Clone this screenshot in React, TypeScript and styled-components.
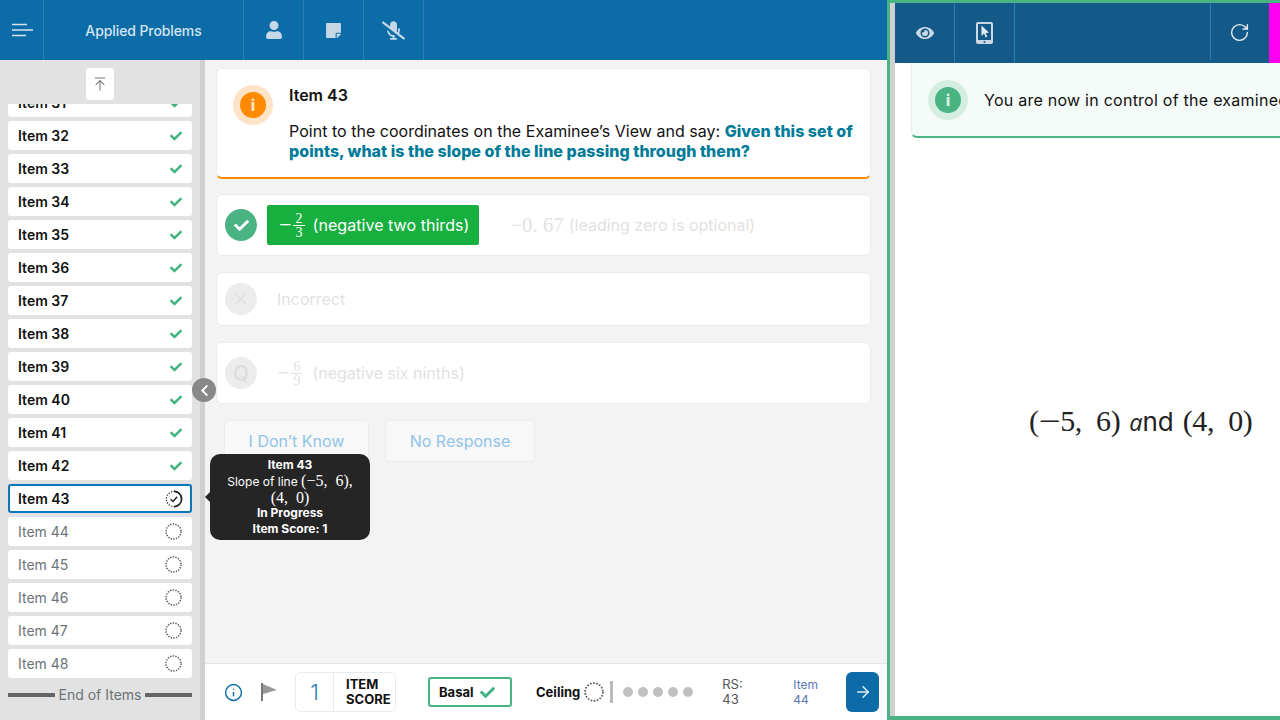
import React from "react";
import styled, { createGlobalStyle } from "styled-components";
import { FaUser, FaStickyNote, FaMicrophoneSlash, FaEye, FaChevronLeft, FaCheck } from "react-icons/fa";
import { ArrowRight, ArrowUpToLine, Info, RotateCw, X } from "lucide-react";

const GlobalStyle = createGlobalStyle`
  html, body {
    margin: 0;
    padding: 0;
    width: 1280px;
    height: 720px;
    overflow: hidden;
    font-family: "Inter", "Liberation Sans", sans-serif;
  }
  * { box-sizing: border-box; }
`;

const doneItems = [32, 33, 34, 35, 36, 37, 38, 39, 40, 41, 42];
const pendingItems = [44, 45, 46, 47, 48];

const DottedCircle: React.FC<{ size?: number }> = ({ size = 17 }) => (
  <svg width={size} height={size} viewBox="0 0 16 16" fill="none" aria-hidden={true}>
    <circle cx="8" cy="8" r="7.1" stroke="#5a5a5a" strokeWidth="1.4" strokeDasharray="1.3 1.2" />
  </svg>
);

const ProgressCircle: React.FC = () => (
  <svg width="18" height="18" viewBox="0 0 18 18" fill="none" aria-hidden={true}>
    <circle cx="9" cy="9" r="7.6" stroke="#444" strokeWidth="1.3" strokeDasharray="1.4 1.3" />
    <path d="M9 1.4 A7.6 7.6 0 0 1 9 16.6" stroke="#222" strokeWidth="1.6" />
    <path d="M5.6 9.2 L8 11.4 L12.2 6.8" stroke="#222" strokeWidth="1.4" />
  </svg>
);

const Fraction: React.FC<{ top: string; bottom: string }> = ({ top, bottom }) => (
  <MathText>
    <Minus>−</Minus>
    <Frac>
      <span>{top}</span>
      <span>{bottom}</span>
    </Frac>
  </MathText>
);

const App: React.FC = () => {
  return (
    <Page>
      <GlobalStyle />
      <LeftPane>
        <Header>
          <MenuCell>
            <svg width="22" height="14" viewBox="0 0 22 14" fill="none" aria-hidden={true}>
              <path d="M0 1.5H15M0 7H21M0 12.5H14" stroke="#d5e4ef" strokeWidth="1.6" />
            </svg>
          </MenuCell>
          <TitleCell>Applied Problems</TitleCell>
          <IconCell>
            <FaUser size={18} aria-hidden={true} />
          </IconCell>
          <IconCell>
            <FaStickyNote size={17} aria-hidden={true} />
          </IconCell>
          <IconCell>
            <FaMicrophoneSlash size={23} aria-hidden={true} />
          </IconCell>
        </Header>
        <Body>
          <Sidebar>
            <ScrollTop>
              <ArrowUpToLine size={16} strokeWidth={1.6} aria-hidden={true} />
            </ScrollTop>
            <ItemList>
              <ItemScroller>
                <ItemRow>
                  <span>Item 31</span>
                  <FaCheck size={12} color="#3fb27f" aria-hidden={true} />
                </ItemRow>
                {doneItems.map((n) => (
                  <ItemRow key={n}>
                    <span>Item {n}</span>
                    <FaCheck size={12} color="#3fb27f" aria-hidden={true} />
                  </ItemRow>
                ))}
                <ItemRow $active>
                  <span>Item 43</span>
                  <ProgressCircle />
                </ItemRow>
                {pendingItems.map((n) => (
                  <ItemRow key={n} $pending>
                    <span>Item {n}</span>
                    <DottedCircle />
                  </ItemRow>
                ))}
              </ItemScroller>
            </ItemList>
            <EndOfItems>
              <EndLine />
              <span>End of Items</span>
              <EndLine />
            </EndOfItems>
          </Sidebar>
          <MainColumn>
            <Content>
              <QuestionCard>
                <Badge $ring="#ffe3c6" $fill="#ff8a00">
                  <span>i</span>
                </Badge>
                <QuestionText>
                  <QuestionTitle>Item 43</QuestionTitle>
                  <QuestionBody>
                    Point to the coordinates on the Examinee’s View and say:{" "}
                    <Prompt>
                      Given this set of points, what is the slope of the line passing through them?
                    </Prompt>
                  </QuestionBody>
                </QuestionText>
              </QuestionCard>

              <AnswerCard $height={62}>
                <AnswerIcon $selected>
                  <FaCheck size={15} aria-hidden={true} />
                </AnswerIcon>
                <SelectedAnswer>
                  <Fraction top="2" bottom="3" />
                  <span>(negative two thirds)</span>
                </SelectedAnswer>
                <MutedText $left={31} $gap={5}>
                  <DecimalNumber>−0.&nbsp;67</DecimalNumber> (leading zero is optional)
                </MutedText>
              </AnswerCard>

              <AnswerCard $height={54}>
                <AnswerIcon>
                  <X size={20} strokeWidth={1.4} aria-hidden={true} />
                </AnswerIcon>
                <MutedText $left={20} $gap={8}>Incorrect</MutedText>
              </AnswerCard>

              <AnswerCard $height={62}>
                <AnswerIcon>
                  <QMark>Q</QMark>
                </AnswerIcon>
                <MutedText $left={20} $gap={10}>
                  <Fraction top="6" bottom="9" /> (negative six ninths)
                </MutedText>
              </AnswerCard>

              <ActionRow>
                <ActionButton $width={145}>I Don’t Know</ActionButton>
                <ActionButton $width={150}>No Response</ActionButton>
              </ActionRow>
            </Content>

            <Footer>
              <FooterInfo>
                <Info size={19} strokeWidth={1.8} aria-hidden={true} />
              </FooterInfo>
              <FlagIcon width="16" height="18" viewBox="0 0 16 18" aria-hidden={true}>
                <rect x="0" y="0" width="2" height="18" fill="#777" />
                <path d="M2 1 L16 7 L2 11 Z" fill="#999" />
              </FlagIcon>
              <ScoreBox>
                <ScoreValue>1</ScoreValue>
                <ScoreLabel>
                  ITEM
                  <br />
                  SCORE
                </ScoreLabel>
              </ScoreBox>
              <BasalBox>
                Basal
                <FaCheck size={15} color="#3fb27f" aria-hidden={true} />
              </BasalBox>
              <Ceiling>
                Ceiling
                <DottedCircle size={20} />
              </Ceiling>
              <VerticalRule />
              <Dots>
                {[0, 1, 2, 3, 4].map((d) => (
                  <Dot key={d} />
                ))}
              </Dots>
              <RawScore>
                RS:
                <br />
                43
              </RawScore>
              <NextLabel>
                Item
                <br />
                44
              </NextLabel>
              <NextButton>
                <ArrowRight size={18} strokeWidth={2} aria-hidden={true} />
              </NextButton>
            </Footer>
          </MainColumn>
        </Body>
      </LeftPane>

      <RightPane>
        <GreyStrip />
        <RightColumn>
          <RightHeader>
            <RightCell>
              <FaEye size={18} aria-hidden={true} />
            </RightCell>
            <RightCell>
              <svg width="18" height="22" viewBox="0 0 18 22" aria-hidden={true}>
                <rect x="0" y="0" width="17" height="22" rx="2" fill="#c9d8e4" />
                <rect x="2" y="2" width="13" height="16" fill="#145a88" />
                <path d="M5.5 3.5 L5.5 14 L8 11.6 L9.8 15.6 L11.4 14.8 L9.6 11 L13 10.8 Z" fill="#e4edf3" />
                <circle cx="8.5" cy="20" r="1" fill="#145a88" />
              </svg>
            </RightCell>
            <RightSpacer />
            <RefreshCell>
              <RotateCw size={21} strokeWidth={1.6} aria-hidden={true} />
            </RefreshCell>
            <MagentaTab />
          </RightHeader>
          <RightBody>
            <ControlAlert>
              <Badge $ring="#d4eee2" $fill="#4ab384">
                <span>i</span>
              </Badge>
              <AlertText>You are now in control of the examinee’s screen.</AlertText>
            </ControlAlert>
            <Stimulus>
              <StimulusMath>
                (<StimulusMinus>−</StimulusMinus>5,&nbsp;&nbsp;6)
              </StimulusMath>
              <span>
                <AndLetter>a</AndLetter>nd
              </span>
              <StimulusMath>(4,&nbsp;&nbsp;0)</StimulusMath>
            </Stimulus>
          </RightBody>
        </RightColumn>
      </RightPane>

      <CollapseButton>
        <FaChevronLeft size={13} aria-hidden={true} />
      </CollapseButton>
      <TooltipArrow />
      <Tooltip>
        <strong>Item 43</strong>
        <TooltipLine>
          Slope of line <TooltipMath>(−5,&nbsp;&nbsp;6),</TooltipMath>
        </TooltipLine>
        <TooltipMath>(4,&nbsp;&nbsp;0)</TooltipMath>
        <strong>In Progress</strong>
        <strong>Item Score: 1</strong>
      </Tooltip>
    </Page>
  );
};

export default App;

const Page = styled.div`
  position: relative;
  display: flex;
  width: 1280px;
  height: 720px;
  overflow: hidden;
  background: #fff;
`;

const LeftPane = styled.div`
  flex: 0 0 887px;
  display: flex;
  flex-direction: column;
`;

const Header = styled.div`
  display: flex;
  flex: 0 0 60px;
  background: #0b6ca8;
  color: #c6d8e6;
`;

const MenuCell = styled.div`
  flex: 0 0 44px;
  display: flex;
  align-items: center;
  padding-left: 12px;
  border-right: 1px solid #2a7fb5;
`;

const TitleCell = styled.div`
  flex: 0 0 200px;
  display: flex;
  align-items: center;
  justify-content: center;
  border-right: 1px solid #2a7fb5;
  color: #d5e4ef;
  font-size: 14px;
  font-weight: 500;
  letter-spacing: -0.1px;
`;

const IconCell = styled.div`
  flex: 0 0 60px;
  display: flex;
  align-items: center;
  justify-content: center;
  border-right: 1px solid #2a7fb5;
`;

const Body = styled.div`
  flex: 1;
  display: flex;
  min-height: 0;
`;

const Sidebar = styled.div`
  flex: 0 0 205px;
  display: flex;
  flex-direction: column;
  padding-top: 8px;
  background: #e2e2e2;
  border-right: 5px solid #d0d0d0;
`;

const ScrollTop = styled.div`
  align-self: center;
  flex: 0 0 32px;
  width: 28px;
  display: flex;
  align-items: center;
  justify-content: center;
  background: #fff;
  border-radius: 3px;
  color: #777;
`;

const ItemList = styled.div`
  flex: 0 0 574px;
  margin-top: 4px;
  overflow: hidden;
`;

const ItemScroller = styled.div`
  display: flex;
  flex-direction: column;
  gap: 4px;
  margin-top: -16px;
  padding: 0 8px;
`;

const ItemRow = styled.div<{ $active?: boolean; $pending?: boolean }>`
  flex: 0 0 29px;
  display: flex;
  align-items: center;
  justify-content: space-between;
  padding: 0 ${({ $active }) => ($active ? "7px" : "10px")} 0 ${({ $active }) => ($active ? "8px" : "10px")};
  background: #fff;
  border-radius: 3px;
  border: ${({ $active }) => ($active ? "2px solid #0b76bc" : "none")};
  color: ${({ $pending }) => ($pending ? "#6b7378" : "#111")};
  font-size: 14px;
  font-weight: ${({ $pending }) => ($pending ? 400 : 600)};
`;

const EndOfItems = styled.div`
  display: flex;
  align-items: center;
  justify-content: space-between;
  padding: 0 8px;
  margin-top: 8px;
  color: #6b7378;
  font-size: 14px;
`;

const EndLine = styled.div`
  flex: 0 0 47px;
  height: 4px;
  background: #666;
`;

const MainColumn = styled.div`
  flex: 1;
  display: flex;
  flex-direction: column;
  min-width: 0;
`;

const Content = styled.div`
  flex: 1;
  display: flex;
  flex-direction: column;
  padding: 8px 16px 0 11px;
  background: #f3f3f3;
`;

const QuestionCard = styled.div`
  display: flex;
  height: 111px;
  margin-bottom: 15px;
  padding: 16px 16px 0 16px;
  background: #fff;
  border: 1px solid #e6eaf2;
  border-bottom: 2px solid #ff8a00;
  border-radius: 6px;
`;

const Badge = styled.div<{ $ring: string; $fill: string }>`
  flex: 0 0 40px;
  width: 40px;
  height: 40px;
  display: flex;
  align-items: center;
  justify-content: center;
  background: ${({ $ring }) => $ring};
  border-radius: 50%;

  span {
    width: 26px;
    height: 26px;
    display: flex;
    align-items: center;
    justify-content: center;
    background: ${({ $fill }) => $fill};
    border-radius: 50%;
    color: rgba(255, 255, 255, 0.8);
    font-size: 16px;
    font-weight: 800;
  }
`;

const QuestionText = styled.div`
  margin-left: 16px;
`;

const QuestionTitle = styled.div`
  height: 20px;
  margin-bottom: 16px;
  color: #111;
  font-size: 16px;
  font-weight: 600;
  line-height: 20px;
`;

const QuestionBody = styled.div`
  color: #111;
  font-size: 16px;
  line-height: 20px;
  letter-spacing: 0.02px;
`;

const Prompt = styled.span`
  color: #007b9a;
  font-weight: 800;
`;

const AnswerCard = styled.div<{ $height: number }>`
  display: flex;
  align-items: center;
  flex: 0 0 ${({ $height }) => $height}px;
  margin-bottom: 16px;
  padding-left: 8px;
  background: #fff;
  border: 1px solid #e6eaf2;
  border-radius: 6px;
`;

const AnswerIcon = styled.div<{ $selected?: boolean }>`
  flex: 0 0 32px;
  height: 32px;
  display: flex;
  align-items: center;
  justify-content: center;
  background: ${({ $selected }) => ($selected ? "#4ab384" : "#ececec")};
  border-radius: 50%;
  color: ${({ $selected }) => ($selected ? "#fff" : "#dedede")};
`;

const QMark = styled.span`
  font-size: 21px;
  font-weight: 500;
`;

const SelectedAnswer = styled.div`
  display: flex;
  align-items: center;
  gap: 8px;
  height: 40px;
  margin-left: 10px;
  padding: 0 10px 0 12px;
  background: #17b03f;
  border-radius: 2px;
  color: #fff;
  font-size: 16px;
  letter-spacing: 0.05px;
`;

const MutedText = styled.div<{ $left: number; $gap: number }>`
  display: flex;
  align-items: center;
  gap: ${({ $gap }) => $gap}px;
  margin-left: ${({ $left }) => $left}px;
  color: #e3e1df;
  font-size: 16px;
`;

const MathText = styled.span`
  display: inline-flex;
  align-items: center;
  gap: 2px;
  font-family: "Liberation Serif", serif;
`;

const Minus = styled.span`
  font-size: 22px;
`;

const Frac = styled.span`
  display: inline-flex;
  flex-direction: column;
  align-items: center;
  font-size: 14px;
  line-height: 13px;

  span:first-child {
    padding: 0 2px;
    border-bottom: 1px solid currentColor;
  }
`;

const DecimalNumber = styled.span`
  font-family: "Liberation Serif", serif;
  font-size: 1.3em;
`;

const ActionRow = styled.div`
  display: flex;
  gap: 16px;
  padding-left: 8px;
`;

const ActionButton = styled.div<{ $width: number }>`
  flex: 0 0 ${({ $width }) => $width}px;
  height: 42px;
  display: flex;
  align-items: center;
  justify-content: center;
  background: #f8f8f8;
  border: 1px solid #ececec;
  border-radius: 4px;
  color: #90c4e8;
  font-size: 16px;
`;

const Footer = styled.div`
  flex: 0 0 57px;
  display: flex;
  align-items: center;
  padding-left: 19px;
  background: #fff;
  border-top: 1px solid #e5e5e5;
`;

const FooterInfo = styled.div`
  display: flex;
  color: #0b6ca8;
`;

const FlagIcon = styled.svg`
  margin-left: 18px;
  margin-right: 18px;
`;

const ScoreBox = styled.div`
  flex: 0 0 101px;
  height: 40px;
  display: flex;
  align-items: center;
  border: 1px solid #e6eaf2;
  border-radius: 6px;
`;

const ScoreValue = styled.div`
  flex: 0 0 38px;
  height: 100%;
  display: flex;
  align-items: center;
  justify-content: center;
  border-right: 1px solid #e6eaf2;
  color: #2a7fb5;
  font-size: 22px;
  font-weight: 300;
`;

const ScoreLabel = styled.div`
  padding-left: 12px;
  color: #111;
  font-size: 13px;
  font-weight: 700;
  line-height: 15px;
  white-space: nowrap;
`;

const BasalBox = styled.div`
  flex: 0 0 84px;
  height: 30px;
  display: flex;
  align-items: center;
  gap: 6px;
  margin-left: 32px;
  padding-left: 9px;
  border: 2px solid #4ab384;
  border-radius: 3px;
  color: #111;
  font-size: 13px;
  font-weight: 700;
`;

const Ceiling = styled.div`
  display: flex;
  align-items: center;
  gap: 4px;
  margin-left: 24px;
  color: #111;
  font-size: 13px;
  font-weight: 700;
`;

const VerticalRule = styled.div`
  flex: 0 0 3px;
  height: 22px;
  margin-left: 6px;
  background: #bbb;
`;

const Dots = styled.div`
  display: flex;
  gap: 5px;
  margin-left: 10px;
`;

const Dot = styled.div`
  width: 10px;
  height: 10px;
  background: #c0c0c0;
  border-radius: 50%;
`;

const RawScore = styled.div`
  flex: 0 0 71px;
  margin-left: 29px;
  color: #555;
  font-size: 13px;
  line-height: 15px;
`;

const NextLabel = styled.div`
  flex: 0 0 53px;
  color: #5a78b0;
  font-size: 12px;
  line-height: 15px;
`;

const NextButton = styled.div`
  flex: 0 0 33px;
  height: 40px;
  display: flex;
  align-items: center;
  justify-content: center;
  background: #0b6ca8;
  border-radius: 6px;
  color: #e4edf3;
`;

const RightPane = styled.div`
  flex: 1;
  display: flex;
  min-width: 0;
  border: solid #4ab384;
  border-width: 3px 0 4px 3px;
`;

const GreyStrip = styled.div`
  flex: 0 0 5px;
  background: #d0d0d0;
`;

const RightColumn = styled.div`
  flex: 1;
  display: flex;
  flex-direction: column;
  min-width: 0;
`;

const RightHeader = styled.div`
  flex: 0 0 60px;
  display: flex;
  background: #145a88;
  color: #c9d8e4;
`;

const RightCell = styled.div`
  flex: 0 0 60px;
  display: flex;
  align-items: center;
  justify-content: center;
  border-right: 1px solid #2a7fb5;
`;

const RightSpacer = styled.div`
  flex: 1;
`;

const RefreshCell = styled(RightCell)`
  flex: 0 0 59px;
  margin-bottom: 3px;
  padding-top: 1px;
  padding-right: 2px;
  border-right: none;
  border-left: 1px solid #2a7fb5;
  color: #e4edf3;
`;

const MagentaTab = styled.div`
  flex: 0 0 11px;
  background: #ff00ee;
`;

const RightBody = styled.div`
  flex: 1;
  display: flex;
  flex-direction: column;
  overflow: hidden;
`;

const ControlAlert = styled.div`
  flex: 0 0 75px;
  display: flex;
  align-items: center;
  width: 500px;
  margin-left: 16px;
  padding-left: 16px;
  background: #f5fbf8;
  border-left: 1px solid #e6eaf2;
  border-bottom: 2px solid #4ab384;
  border-bottom-left-radius: 6px;
`;

const AlertText = styled.div`
  margin-left: 16px;
  color: #111;
  font-size: 16px;
  letter-spacing: 0.25px;
  white-space: nowrap;
`;

const Stimulus = styled.div`
  display: flex;
  align-items: baseline;
  gap: 9px;
  margin-top: 266px;
  padding-left: 134px;
  color: #222;
  font-size: 26px;
  white-space: nowrap;
`;

const StimulusMath = styled.span`
  font-family: "Liberation Serif", serif;
  font-size: 30px;
  letter-spacing: -0.4px;
`;

const StimulusMinus = styled.span`
  display: inline-block;
  padding: 0 2.5px;
  transform: scaleX(1.3);
`;

const AndLetter = styled.span`
  font-family: "Open Sans", sans-serif;
  font-size: 0.9em;
  font-style: italic;
`;

const CollapseButton = styled.div`
  position: absolute;
  left: 192px;
  top: 378px;
  width: 24px;
  height: 24px;
  display: flex;
  align-items: center;
  justify-content: center;
  background: #888;
  border-radius: 50%;
  color: #fff;
`;

const TooltipArrow = styled.div`
  position: absolute;
  left: 205px;
  top: 492px;
  border-style: solid;
  border-width: 5px 5px 5px 0;
  border-color: transparent #252525 transparent transparent;
`;

const Tooltip = styled.div`
  position: absolute;
  left: 210px;
  top: 454px;
  width: 160px;
  height: 86px;
  display: flex;
  flex-direction: column;
  align-items: center;
  justify-content: center;
  background: #252525;
  border-radius: 10px;
  color: #fff;
  font-size: 12px;
  line-height: 15.75px;
  text-align: center;

  strong {
    font-weight: 700;
  }
`;

const TooltipLine = styled.div`
  white-space: nowrap;
`;

const TooltipMath = styled.span`
  font-family: "Liberation Serif", serif;
  font-size: 16px;
`;
